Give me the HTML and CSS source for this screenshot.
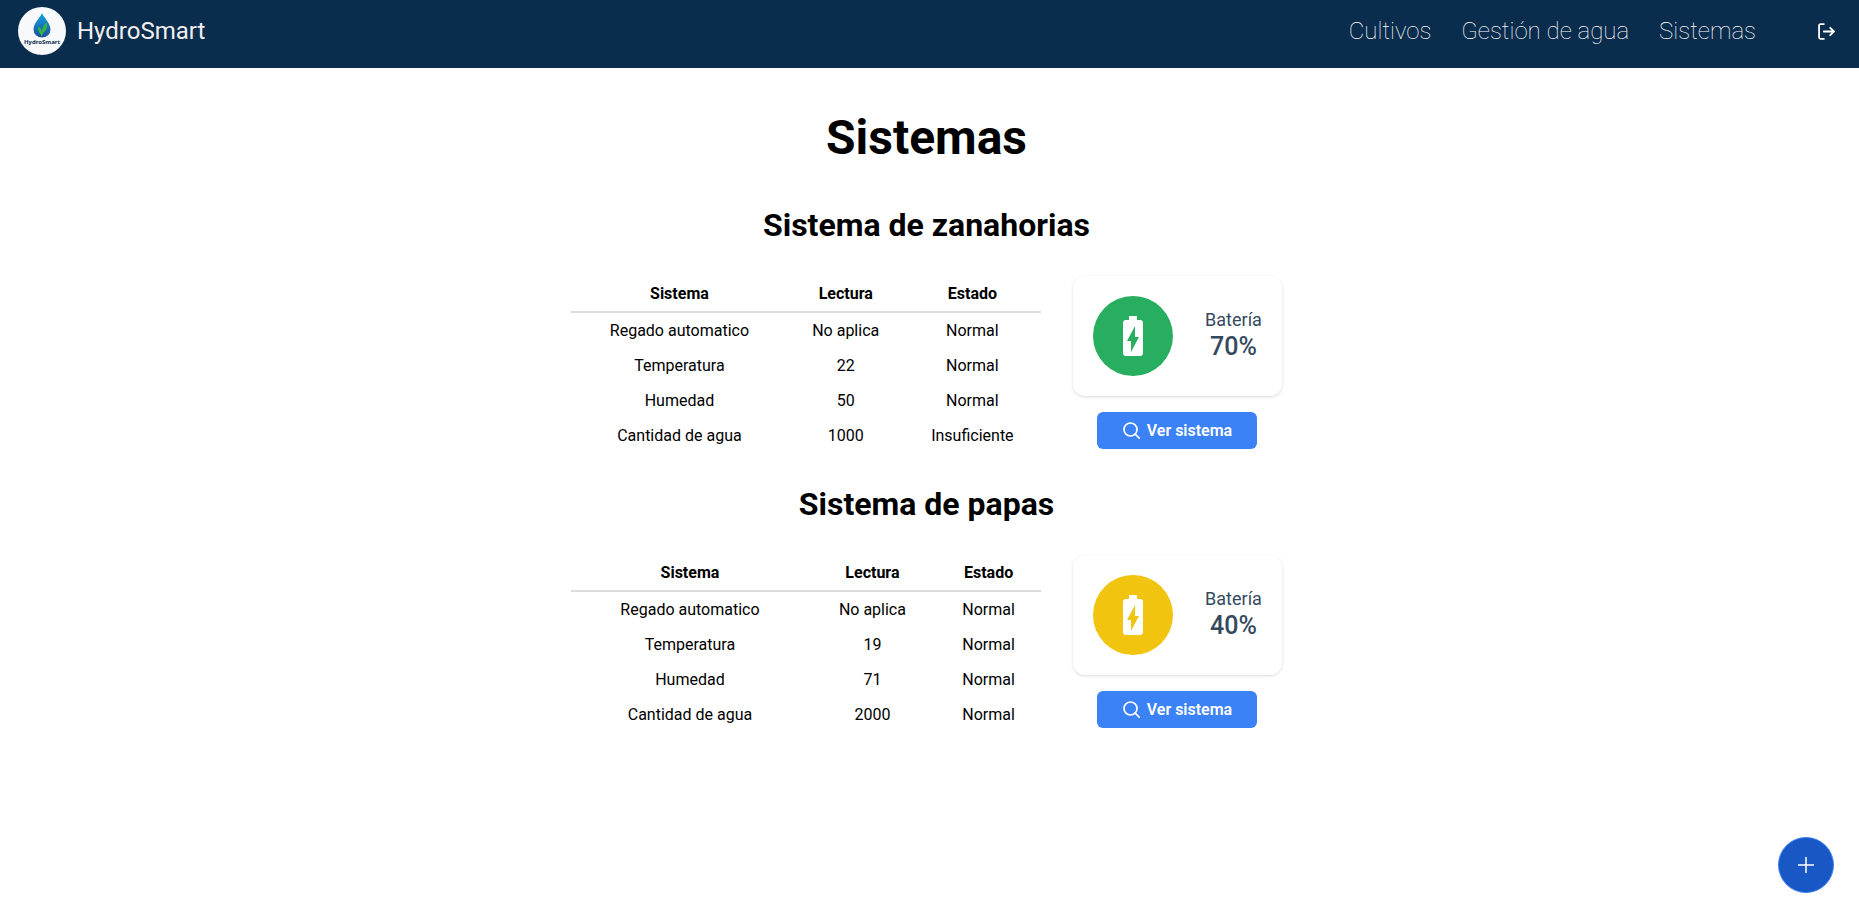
FILE: index.html
```html
<!DOCTYPE html>
<html lang="es">
<head>
<meta charset="utf-8">
<title>HydroSmart</title>
<link rel="stylesheet" href="styles.css">
</head>
<body>
<header class="topbar">
  <a class="brand" href="#">
    <svg class="logo" viewBox="0 0 48 48" aria-hidden="true">
      <defs><linearGradient id="drop" x1="0" y1="0" x2="0" y2="1"><stop offset="0" stop-color="#12a5e0"/><stop offset="1" stop-color="#1c4f9c"/></linearGradient></defs>
      <circle cx="24" cy="24" r="24" fill="#f8f9fa"/>
      <path d="M24 6C22 11 15.500 16 15.500 22.500a8.500 8 0 0 0 17 0C32.500 16 26 11 24 6z" fill="url(#drop)"/>
      <path d="M23.500 30c0-3-3.500-4-3.500-10 3 .8 4 3 3.800 5C24.500 20 26 17.500 29 15c.8 5-.5 8.500-4 11z" fill="#35b34a"/>
      <text class="logo-text" x="24" y="37" text-anchor="middle">HydroSmart</text>
    </svg>
    <span>HydroSmart</span>
  </a>
  <nav class="nav">
    <a href="#">Cultivos</a>
    <a href="#">Gestión de agua</a>
    <a href="#">Sistemas</a>
    <button class="logout" aria-label="Cerrar sesión">
      <svg viewBox="0 0 16 16" width="17" height="17" fill="none" stroke="currentColor" stroke-width="1.700" stroke-linecap="round" stroke-linejoin="round"><path d="M5.500 1H2.500Q1 1 1 2.500v11Q1 15 2.500 15H5.500M5.500 8H15M11.500 4.500 15 8l-3.500 3.500"/></svg>
    </button>
  </nav>
</header>
<main class="page">
  <h1>Sistemas</h1>
  <section class="system">
    <h2>Sistema de zanahorias</h2>
    <div class="row">
      <table>
        <thead><tr><th>Sistema</th><th>Lectura</th><th>Estado</th></tr></thead>
        <tbody>
          <tr><td>Regado automatico</td><td>No aplica</td><td>Normal</td></tr>
          <tr><td>Temperatura</td><td>22</td><td>Normal</td></tr>
          <tr><td>Humedad</td><td>50</td><td>Normal</td></tr>
          <tr><td>Cantidad de agua</td><td>1000</td><td>Insuficiente</td></tr>
        </tbody>
      </table>
      <div class="side">
        <div class="card">
          <div class="badge good"><svg viewBox="0 0 24 24" width="48" height="48" fill="currentColor"><path d="M15.670 4H14V2h-4v2H8.330C7.600 4 7 4.600 7 5.330v15.330C7 21.400 7.600 22 8.330 22h7.330c.74 0 1.340-.6 1.340-1.330V5.330C17 4.600 16.400 4 15.670 4zM11 20v-5.500H9L13 7v5.500h2L11 20z"/></svg></div>
          <div class="level"><span>Batería</span><strong>70%</strong></div>
        </div>
        <button class="view"><svg viewBox="0 0 17 17" width="17" height="17" fill="none" stroke="currentColor" stroke-width="1.700" stroke-linecap="round"><circle cx="7.500" cy="7.500" r="6.500"/><path d="m12.200 12.200 4 4"/></svg>Ver sistema</button>
      </div>
    </div>
  </section>
  <section class="system">
    <h2>Sistema de papas</h2>
    <div class="row">
      <table>
        <thead><tr><th>Sistema</th><th>Lectura</th><th>Estado</th></tr></thead>
        <tbody>
          <tr><td>Regado automatico</td><td>No aplica</td><td>Normal</td></tr>
          <tr><td>Temperatura</td><td>19</td><td>Normal</td></tr>
          <tr><td>Humedad</td><td>71</td><td>Normal</td></tr>
          <tr><td>Cantidad de agua</td><td>2000</td><td>Normal</td></tr>
        </tbody>
      </table>
      <div class="side">
        <div class="card">
          <div class="badge medium"><svg viewBox="0 0 24 24" width="48" height="48" fill="currentColor"><path d="M15.670 4H14V2h-4v2H8.330C7.600 4 7 4.600 7 5.330v15.330C7 21.400 7.600 22 8.330 22h7.330c.74 0 1.340-.6 1.340-1.330V5.330C17 4.600 16.400 4 15.670 4zM11 20v-5.500H9L13 7v5.500h2L11 20z"/></svg></div>
          <div class="level"><span>Batería</span><strong>40%</strong></div>
        </div>
        <button class="view"><svg viewBox="0 0 17 17" width="17" height="17" fill="none" stroke="currentColor" stroke-width="1.700" stroke-linecap="round"><circle cx="7.500" cy="7.500" r="6.500"/><path d="m12.200 12.200 4 4"/></svg>Ver sistema</button>
      </div>
    </div>
  </section>
</main>
<button class="fab" aria-label="Agregar sistema"><svg viewBox="0 0 16 16" width="16" height="16" stroke="currentColor" stroke-width="1.500"><path d="M8 0v16M0 8h16"/></svg></button>
</body>
</html>
```
FILE: styles.css
```css
* { box-sizing: border-box; }
body { margin: 0; background: #fff; color: #000; font-family: Roboto, sans-serif; font-size: 16px; }
h1, h2 { margin: 0; font-weight: 700; }
button { font: inherit; cursor: pointer; }

.topbar { display: flex; justify-content: space-between; align-items: center; padding: 7px 18px 13px; background: #0a2c4d; }
.brand { display: flex; align-items: center; gap: 11px; color: #f0f0f0; font-size: 24px; text-decoration: none; }
.logo { width: 48px; height: 48px; }
.logo-text { font: 700 6px "Noto Sans", sans-serif; fill: #0a2c4d; }
.nav { display: flex; align-items: center; gap: 30px; padding-right: 6px; }
.nav a { color: #fff; font-size: 24px; font-weight: 100; text-decoration: none; }
.logout { display: flex; margin-left: 32px; padding: 0; border: 0; background: none; color: #fff; }

.page { display: flex; flex-direction: column; align-items: center; gap: 32px; padding: 42px 6px 40px 0; }
h1 { font-size: 48px; line-height: 56px; margin-bottom: 8px; }
.system { display: flex; flex-direction: column; align-items: center; gap: 32px; }
h2 { font-size: 32px; line-height: 38px; }
.row { display: flex; align-items: flex-start; gap: 32px; }
table { width: 470px; border-collapse: separate; border-spacing: 0; text-align: center; line-height: 19px; }
th, td { padding: 8px; }
th { font-weight: 700; border-bottom: 2px solid #dcdcdc; }
.side { display: flex; flex-direction: column; align-items: center; gap: 16px; }
.card { display: flex; align-items: center; gap: 32px; padding: 20px; border-radius: 12px; background: #fff; box-shadow: 0 1px 3px rgba(0, 0, 0, 0.15); }
.badge { display: flex; align-items: center; justify-content: center; width: 80px; height: 80px; border-radius: 50%; color: #fff; }
.good { background: #27ae60; }
.medium { background: #f1c40f; }
.level { display: flex; flex-direction: column; align-items: center; color: #34495e; font-size: 18px; line-height: 22px; }
.level strong { font-size: 25px; font-weight: 500; line-height: 32px; }
.view { display: flex; align-items: center; justify-content: center; gap: 7px; width: 160px; padding: 9px 0; border: 0; border-radius: 6px; background: #3b82f6; color: #fff; font-weight: 600; line-height: 19px; }
.fab { position: fixed; right: 25px; bottom: 19px; display: flex; align-items: center; justify-content: center; width: 56px; height: 56px; padding: 0; border: 1px solid #3b82f6; border-radius: 50%; background: #1857c4; color: #fff; }
```
